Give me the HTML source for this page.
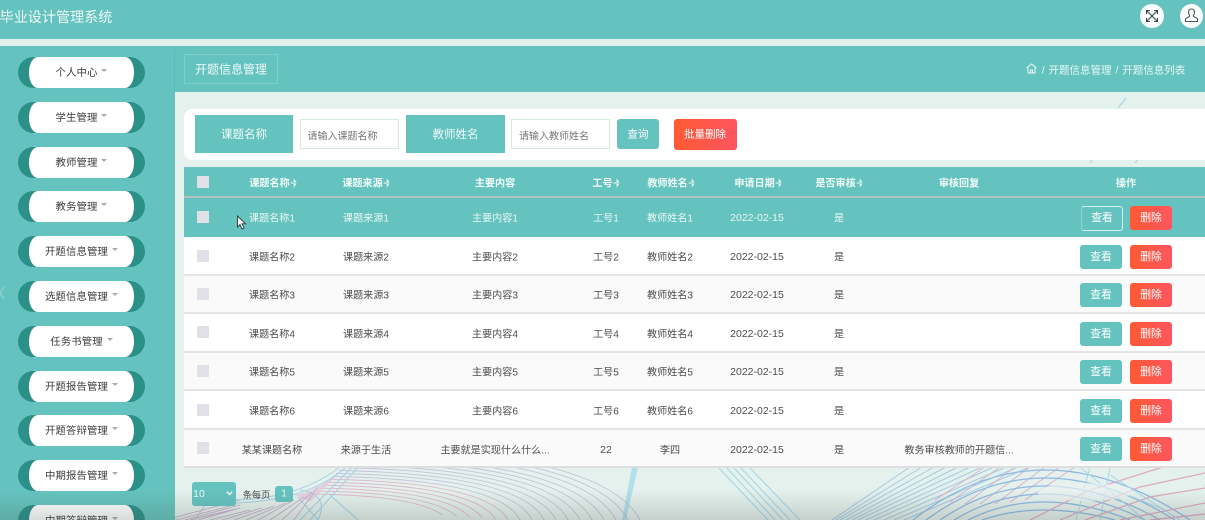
<!DOCTYPE html>
<html lang="zh"><head><meta charset="utf-8"><title>开题信息管理</title>
<style>
*{box-sizing:border-box;margin:0;padding:0}
html,body{width:1205px;height:520px;overflow:hidden;background:#e5f1ec}
body{position:relative;font-family:"Liberation Sans","Noto Sans CJK SC",sans-serif;color:#4d4d4d}
.a{position:absolute}
.t{position:absolute;white-space:nowrap;transform:translate(-50%,-50%);filter:blur(.3px)}
.pill{position:absolute;left:18px;width:127px;height:31px;background:#2a9088;border-radius:16px}
.pill i{position:absolute;left:11px;width:105px;height:31px;background:#fff;border-radius:9px/15px;display:block;font-style:normal;text-align:center;line-height:33px;font-size:10.400px;color:#3d3d3d;letter-spacing:.1px;filter:blur(.25px)}
.pill b{display:inline-block;width:0;height:0;border:3px solid transparent;border-top:3px solid #aaa;border-bottom:0;margin-left:4px;vertical-align:4px}
.rowbg{position:absolute;left:184px;width:1021px}
.cb{position:absolute;left:197px;width:12px;height:12px;background:#dfe1e6}
.btn{position:absolute;width:42px;height:24px;border-radius:3px;color:#fff;font-size:10.800px;line-height:24px;text-align:center}
.v{left:1080px;background:#65c3bf}
.d{left:1130px;background:linear-gradient(90deg,#ff5a33,#ff5560)}
.s{font-weight:700;color:#f0fbf9}
.s::after{content:"";display:inline-block;width:6px;height:9px;margin-left:1px;vertical-align:-1px;clip-path:polygon(50% 0,100% 45%,0 45%,0 55%,100% 55%,50% 100%);background-color:#f0fbf9}
.n{font-size:10.500px;margin-top:1px}
</style></head><body>

<svg class="a" style="left:173px;top:92px" width="1032" height="428" viewBox="173 92 1032 428" fill="none">
<defs><clipPath id="arc"><path d="M350 460 303 505 640 530 700 440Z"/></clipPath></defs>
<g stroke="#a9d8e8" stroke-width="1.2"><path d="M1118 108 1126 98M1090 163 1094 156M1135 163 1141 156"/>
<path d="M718 467 768 520M726 467 775 520M733 467 783 520M740 467 790 520M749 467 800 520"/></g>
<path d="M632 467 638 467 626 520 622 520Z" fill="#a8dcea" opacity=".85"/>
<g clip-path="url(#arc)" opacity=".85">
<g stroke="#bfbad9" stroke-width=".9"><path d="M300 445Q600 445 640 520M300 448Q590 448 628 520M300 451Q580 451 616 520M300 455Q570 455 604 520M300 458Q560 458 592 520M300 461Q550 461 580 520M300 464Q540 464 568 520M300 467Q530 467 556 520M300 470Q520 470 544 520M300 473Q510 473 532 520M300 476Q498 476 520 520"/></g>
<g stroke="#dcb0c6" stroke-width=".9"><path d="M300 479Q486 479 508 520M300 482Q474 482 496 520M300 485Q462 485 484 520M300 488Q450 488 472 520M300 491Q438 491 460 520M300 494Q426 494 448 520"/></g>
</g>
<path d="M345 467Q320 490 296 495L310 502Z" fill="#e3c6d8" opacity=".7"/>
<g stroke="#a8d3e6" stroke-width="1.1"><path d="M340 467Q300 498 236 500M346 467Q310 500 236 503M352 467 300 520M358 467 310 520M300 490Q330 495 318 520M298 497 318 520M330 495 358 520M205 505 195 520"/></g>
<g stroke="#c9aecb" stroke-width=".9"><path d="M173 518 240 500M185 520 240 505M198 520 240 508M210 520 250 510M222 520 262 508M234 520 274 506M246 520 286 503M258 520 294 500M270 520 304 497M282 520 312 492M294 520 318 487M176 520 230 506M190 520 236 509"/></g>
<g stroke="#a5cbe4" stroke-width="1"><path d="M832 520 910 467M836 520 922 467M840 520 934 467M846 520 946 467M852 520 958 467M858 520 970 467M866 520 982 467M874 520 994 467M884 520 1006 467M894 520 1018 467M904 520 1030 467"/></g>
<g stroke="#d8b4cc" stroke-width="1"><path d="M935 500 985 467M950 502 1000 467M965 504 1015 467M980 504 1030 467M995 504 1045 467M1010 502 1060 467M1025 500 1075 467"/></g>
<g stroke="#8cb9e0" stroke-width="1.2"><path d="M913 520Q1040 420 1190 520M926 520Q1040 436 1175 520M940 520Q1040 452 1160 520M954 520Q1040 468 1145 520M968 520Q1040 484 1130 520M982 520Q1040 500 1115 520"/></g>
<g stroke="#dca8c0" stroke-width="1.2"><path d="M1030 520 1090 490 1163 467M1060 520 1140 487 1205 473M1085 520 1150 497 1205 488M1120 520 1205 503M1150 520 1205 514"/></g>
<g stroke="#a8d6e8" stroke-width="1"><path d="M1090 467 1076 520M1110 467 1100 520M1115 490 1165 510M1110 475 1180 520M1080 467 1145 520"/></g>
<ellipse cx="1085" cy="492" rx="48" ry="9" fill="#edf3f4" opacity=".65"/>
</svg>

<div class="a" style="left:0;top:0;width:1205px;height:39px;background:#65c3bf"></div>
<div class="a" style="left:0;top:39px;width:1205px;height:7px;background:#e4f0ec"></div>
<div class="t" style="left:56px;top:17px;font-size:14.100px;color:#eefaf8">毕业设计管理系统</div>
<div class="a" style="left:1140px;top:4px;width:24px;height:24px;border-radius:50%;background:#fff"></div>
<svg class="a" style="left:1145px;top:9px" width="14" height="14" viewBox="0 0 14 14" fill="none" stroke="#33494c" stroke-width="1.100"><path d="M2 2 12 12M12 2 2 12M1.500 5V1.500H5M9 1.500H12.500V5M12.500 9V12.500H9M5 12.500H1.500V9"/></svg>
<div class="a" style="left:1180px;top:4px;width:23px;height:24px;border-radius:50%;background:#fff"></div>
<svg class="a" style="left:1184px;top:8px" width="15" height="15" viewBox="0 0 15 15" fill="none" stroke="#4a5557" stroke-width="1.100"><path d="M7.500 1C5.300 1 4.500 2.500 4.500 4.200 4.500 6 5.400 7 5.800 7.800 5.800 9 2.500 9.500 1.500 11V13.500H13.500V11C12.500 9.500 9.200 9 9.200 7.800 9.600 7 10.500 6 10.500 4.200 10.500 2.500 9.700 1 7.500 1Z"/></svg>

<div class="a" style="left:0;top:46px;width:173px;height:474px;background:#65c3bf"></div>
<div class="a" style="left:173px;top:46px;width:1032px;height:46px;background:#65c3bf"></div>
<div class="a" style="left:173px;top:92px;width:2px;height:428px;background:#65c3bf"></div>
<div class="a" style="left:174px;top:50px;width:1px;height:42px;background:#5db8b8"></div>
<svg class="a" style="left:0;top:285px" width="5" height="16" fill="none" stroke="#9fd4d0" stroke-width="1"><path d="M4 2 0 8 4 14"/></svg>

<div class="pill" style="top:57px"><i>个人中心<b></b></i></div>
<div class="pill" style="top:102px"><i>学生管理<b></b></i></div>
<div class="pill" style="top:147px"><i>教师管理<b></b></i></div>
<div class="pill" style="top:191px"><i>教务管理<b></b></i></div>
<div class="pill" style="top:236px"><i>开题信息管理<b></b></i></div>
<div class="pill" style="top:281px"><i>选题信息管理<b></b></i></div>
<div class="pill" style="top:326px"><i>任务书管理<b></b></i></div>
<div class="pill" style="top:371px"><i>开题报告管理<b></b></i></div>
<div class="pill" style="top:415px"><i>开题答辩管理<b></b></i></div>
<div class="pill" style="top:460px"><i>中期报告管理<b></b></i></div>
<div class="pill" style="top:505px"><i>中期答辩管理<b></b></i></div>

<div class="a" style="left:184px;top:54px;width:94px;height:30px;border:1px solid #7fcfcb"></div>
<div class="t" style="left:231px;top:69px;font-size:12px;color:#eefaf8">开题信息管理</div>
<svg class="a" style="left:1026px;top:63px" width="11" height="11" viewBox="0 0 11 11" fill="none" stroke="#eefaf8" stroke-width="1"><path d="M.5 5 5.500 1 10.500 5M2 4.500V10H9V4.500M4.500 10V7H6.500V10"/></svg>
<div class="t" style="left:1113.500px;top:69.500px;font-size:10.500px;color:#e8f7f5;word-spacing:1px">/ 开题信息管理 / 开题信息列表</div>

<div class="a" style="left:184px;top:109px;width:1021px;height:51px;background:#fff;border-radius:8px 0 0 8px"></div>
<div class="a" style="left:195px;top:115px;width:98px;height:38px;background:#65c3bf"></div>
<div class="t" style="left:244px;top:134px;font-size:11.500px;color:#eefaf8">课题名称</div>
<div class="a" style="left:300px;top:119px;width:99px;height:30px;border:1px solid #d8ead9;background:#fff"></div>
<div class="t" style="left:342.500px;top:134.500px;font-size:10px;color:#777">请输入课题名称</div>
<div class="a" style="left:406px;top:115px;width:99px;height:38px;background:#65c3bf"></div>
<div class="t" style="left:455.500px;top:134px;font-size:11.500px;color:#eefaf8">教师姓名</div>
<div class="a" style="left:511px;top:119px;width:99px;height:30px;border:1px solid #d8ead9;background:#fff"></div>
<div class="t" style="left:554px;top:134.500px;font-size:10px;color:#777">请输入教师姓名</div>
<div class="a" style="left:617px;top:119px;width:42px;height:30px;background:#65c3bf;border-radius:3px"></div>
<div class="t" style="left:638px;top:134px;font-size:10.500px;color:#fff">查询</div>
<div class="a" style="left:674px;top:119px;width:63px;height:31px;background:linear-gradient(90deg,#ff5a33,#ff5560);border-radius:3px"></div>
<div class="t" style="left:705px;top:134px;font-size:10.500px;color:#fff">批量删除</div>

<div class="rowbg" style="top:167px;height:31px;background:#65c3bf;border-bottom:2px solid #b5c4c3"></div>
<div class="rowbg" style="top:198px;height:39px;background:#65c3bf;"></div>
<div class="rowbg" style="top:237px;height:39px;background:#fff;border-bottom:2px solid #e4e4e4"></div>
<div class="rowbg" style="top:276px;height:38px;background:#fafafa;border-bottom:2px solid #e4e4e4"></div>
<div class="rowbg" style="top:314px;height:39px;background:#fff;border-bottom:2px solid #e4e4e4"></div>
<div class="rowbg" style="top:353px;height:38px;background:#fafafa;border-bottom:2px solid #e4e4e4"></div>
<div class="rowbg" style="top:391px;height:39px;background:#fff;border-bottom:2px solid #e4e4e4"></div>
<div class="rowbg" style="top:430px;height:38px;background:#fafafa;border-bottom:2px solid #dcdedf"></div>

<div style="font-size:10.100px">
<div class="cb" style="top:176px"></div><div class="cb" style="top:211px"></div><div class="cb" style="top:250px"></div><div class="cb" style="top:288px"></div><div class="cb" style="top:326px"></div><div class="cb" style="top:365px"></div><div class="cb" style="top:404px"></div><div class="cb" style="top:442px"></div>

<div class="t s" style="left:273px;top:182px">课题名称</div><div class="t s" style="left:366px;top:182px">课题来源</div><div class="t" style="left:495px;top:182px;font-weight:700;color:#f0fbf9">主要内容</div><div class="t s" style="left:606px;top:182px">工号</div><div class="t s" style="left:671px;top:182px">教师姓名</div><div class="t s" style="left:758px;top:182px">申请日期</div><div class="t s" style="left:839px;top:182px">是否审核</div><div class="t" style="left:959px;top:182px;font-weight:700;color:#f0fbf9">审核回复</div><div class="t" style="left:1126px;top:182px;font-weight:700;color:#f0fbf9">操作</div>

<div style="color:#e8f7f5"><div class="t" style="left:272px;top:217px">课题名称1</div><div class="t" style="left:366px;top:217px">课题来源1</div><div class="t" style="left:495px;top:217px">主要内容1</div><div class="t" style="left:606px;top:217px">工号1</div><div class="t" style="left:670px;top:217px">教师姓名1</div><div class="t n" style="left:757px;top:217px">2022-02-15</div><div class="t" style="left:839px;top:217px">是</div></div>

<div class="t" style="left:272px;top:256px">课题名称2</div><div class="t" style="left:366px;top:256px">课题来源2</div><div class="t" style="left:495px;top:256px">主要内容2</div><div class="t" style="left:606px;top:256px">工号2</div><div class="t" style="left:670px;top:256px">教师姓名2</div><div class="t n" style="left:757px;top:256px">2022-02-15</div><div class="t" style="left:839px;top:256px">是</div>

<div class="t" style="left:272px;top:294px">课题名称3</div><div class="t" style="left:366px;top:294px">课题来源3</div><div class="t" style="left:495px;top:294px">主要内容3</div><div class="t" style="left:606px;top:294px">工号3</div><div class="t" style="left:670px;top:294px">教师姓名3</div><div class="t n" style="left:757px;top:294px">2022-02-15</div><div class="t" style="left:839px;top:294px">是</div>

<div class="t" style="left:272px;top:333px">课题名称4</div><div class="t" style="left:366px;top:333px">课题来源4</div><div class="t" style="left:495px;top:333px">主要内容4</div><div class="t" style="left:606px;top:333px">工号4</div><div class="t" style="left:670px;top:333px">教师姓名4</div><div class="t n" style="left:757px;top:333px">2022-02-15</div><div class="t" style="left:839px;top:333px">是</div>

<div class="t" style="left:272px;top:371px">课题名称5</div><div class="t" style="left:366px;top:371px">课题来源5</div><div class="t" style="left:495px;top:371px">主要内容5</div><div class="t" style="left:606px;top:371px">工号5</div><div class="t" style="left:670px;top:371px">教师姓名5</div><div class="t n" style="left:757px;top:371px">2022-02-15</div><div class="t" style="left:839px;top:371px">是</div>

<div class="t" style="left:272px;top:410px">课题名称6</div><div class="t" style="left:366px;top:410px">课题来源6</div><div class="t" style="left:495px;top:410px">主要内容6</div><div class="t" style="left:606px;top:410px">工号6</div><div class="t" style="left:670px;top:410px">教师姓名6</div><div class="t n" style="left:757px;top:410px">2022-02-15</div><div class="t" style="left:839px;top:410px">是</div>

<div class="t" style="left:272px;top:449px">某某课题名称</div><div class="t" style="left:366px;top:449px">来源于生活</div><div class="t" style="left:495px;top:449px">主要就是实现什么什么...</div><div class="t n" style="left:606px;top:449px">22</div><div class="t" style="left:670px;top:449px">李四</div><div class="t n" style="left:757px;top:449px">2022-02-15</div><div class="t" style="left:839px;top:449px">是</div><div class="t" style="left:959px;top:449px">教务审核教师的开题信...</div>
</div>

<div class="btn" style="left:1081px;top:206px;height:25px;width:42px;border:1px solid #d5f0ee;border-left-color:#8ed5d1;line-height:23px">查看</div><div class="btn d" style="top:206px">删除</div>
<div class="btn v" style="top:245px">查看</div><div class="btn d" style="top:245px">删除</div>
<div class="btn v" style="top:283px">查看</div><div class="btn d" style="top:283px">删除</div>
<div class="btn v" style="top:322px">查看</div><div class="btn d" style="top:322px">删除</div>
<div class="btn v" style="top:360px">查看</div><div class="btn d" style="top:360px">删除</div>
<div class="btn v" style="top:399px">查看</div><div class="btn d" style="top:399px">删除</div>
<div class="btn v" style="top:437px">查看</div><div class="btn d" style="top:437px">删除</div>

<svg class="a" style="left:236px;top:215px" width="11" height="15" viewBox="0 0 11 15"><path d="M1.500 1V12L4 9.500 6 14 8 13 6 8.800H9.500Z" fill="#f4f6f6" stroke="#2c3a3c" stroke-width=".9"/></svg>

<div class="a" style="left:192px;top:482px;width:44px;height:24px;background:#65c3bf;border-radius:3px"></div>
<div class="t" style="left:199px;top:494px;font-size:10.500px;color:#eefaf8">10</div>
<svg class="a" style="left:226px;top:491px" width="7" height="5" fill="none" stroke="#eefaf8" stroke-width="1.400"><path d="M.8 .8 3.500 3.500 6.200 .8"/></svg>
<div class="t" style="left:256.500px;top:494px;font-size:9.200px;color:#4a4a4a">条每页</div>
<div class="a" style="left:275px;top:486px;width:18px;height:16px;background:#65c3bf;border-radius:3px"></div>
<div class="t" style="left:284px;top:494px;font-size:10px;color:#eefaf8">1</div>

<div class="a" style="left:0;top:490px;width:1205px;height:30px;background:linear-gradient(rgba(70,80,75,0),rgba(70,80,75,.2));pointer-events:none"></div>
</body></html>
